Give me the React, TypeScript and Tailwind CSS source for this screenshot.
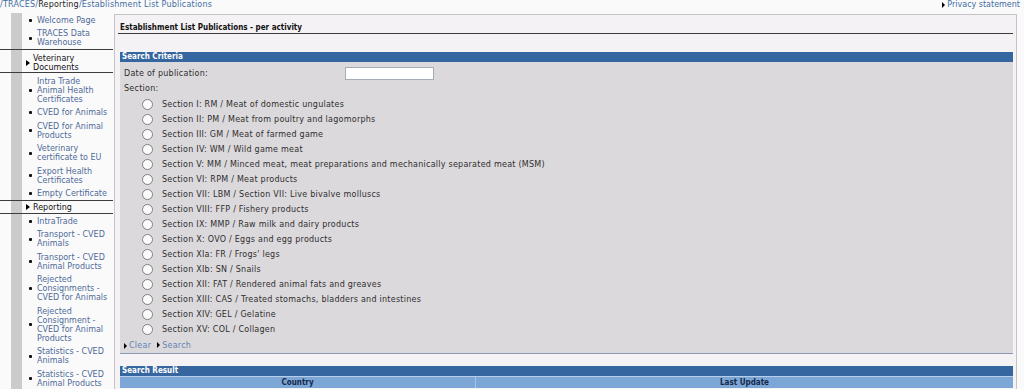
import React from "react";

const font = "font-['DejaVu_Sans',sans-serif]";
const bold = "font-['DejaVu_Sans_Condensed','DejaVu_Sans',sans-serif] font-bold tracking-normal";

const group1 = [["Welcome Page"], ["TRACES Data", "Warehouse"]];

const vetDocs = [
  ["Intra Trade", "Animal Health", "Certificates"],
  ["CVED for Animals"],
  ["CVED for Animal", "Products"],
  ["Veterinary", "certificate to EU"],
  ["Export Health", "Certificates"],
  ["Empty Certificate"],
];

const reporting = [
  ["IntraTrade"],
  ["Transport - CVED", "Animals"],
  ["Transport - CVED", "Animal Products"],
  ["Rejected", "Consignments -", "CVED for Animals"],
  ["Rejected", "Consignment -", "CVED for Animal", "Products"],
  ["Statistics - CVED", "Animals"],
  ["Statistics - CVED", "Animal Products"],
];

const sections = [
  "Section I: RM / Meat of domestic ungulates",
  "Section II: PM / Meat from poultry and lagomorphs",
  "Section III: GM / Meat of farmed game",
  "Section IV: WM / Wild game meat",
  "Section V: MM / Minced meat, meat preparations and mechanically separated meat (MSM)",
  "Section VI: RPM / Meat products",
  "Section VII: LBM / Section VII: Live bivalve molluscs",
  "Section VIII: FFP / Fishery products",
  "Section IX: MMP / Raw milk and dairy products",
  "Section X: OVO / Eggs and egg products",
  "Section XIa: FR / Frogs' legs",
  "Section XIb: SN / Snails",
  "Section XII: FAT / Rendered animal fats and greaves",
  "Section XIII: CAS / Treated stomachs, bladders and intestines",
  "Section XIV: GEL / Gelatine",
  "Section XV: COL / Collagen",
];

function Arrow({ size = 3 }: { size?: number }) {
  return size === 3 ? (
    <span className="inline-block w-0 h-0 border-y-[3px] border-y-transparent border-l-[3px] border-l-black mr-[2px]" />
  ) : (
    <span className="inline-block w-0 h-0 border-y-[3.5px] border-y-transparent border-l-[4px] border-l-black mr-[3px]" />
  );
}

function NavList({ items, className }: { items: string[][]; className: string }) {
  return (
    <ul className={`flex flex-col gap-[4.5px] pl-[29px] ${className}`}>
      {items.map((lines, i) => (
        <li key={i} className="flex items-center">
          <span className="w-[3px] h-[3px] bg-[#111] rounded-[1px] shrink-0" />
          <span className="ml-[5px] leading-[9px] text-[#4d6a98]">
            {lines.map((l, j) => (
              <span key={j} className="block whitespace-nowrap">
                {l}
              </span>
            ))}
          </span>
        </li>
      ))}
    </ul>
  );
}

function Sidebar() {
  return (
    <aside className="w-[113px] shrink-0 bg-[linear-gradient(to_right,transparent_11px,#cbcbcb_11px,#cbcbcb_22px,transparent_22px)]">
      <NavList items={group1} className="pt-[2.5px] pb-[2px]" />
      <div className="border-y border-[#3d3d3d] pl-[26px] pt-[3.5px] pb-[0.5px] flex items-center text-[#111] leading-[9px]">
        <Arrow size={4} />
        <span>
          <span className="block">Veterinary</span>
          <span className="block">Documents</span>
        </span>
      </div>
      <NavList items={vetDocs} className="pt-[3.5px] pb-[2px]" />
      <div className="border-y border-[#3d3d3d] pl-[26px] pt-[1.5px] pb-[1.5px] flex items-center text-[#111] leading-[9px]">
        <Arrow size={4} />
        <span>Reporting</span>
      </div>
      <NavList items={reporting} className="pt-[2.5px]" />
    </aside>
  );
}

function Radio() {
  return (
    <span className="w-[11px] h-[11px] rounded-full border border-[#808080] bg-[#fbfbfb] shrink-0" />
  );
}

export default function App() {
  return (
    <div className={`w-[1024px] h-[389px] overflow-hidden bg-[#fbfafb] text-[8px] ${font}`}>
      <div className="h-[13px] flex justify-between leading-[9px]">
        <div className="text-[#3f6da3] tracking-[0.2px]">
          /TRACES/<span className="text-[#1a1a1a]">Reporting</span>/Establishment List Publications
        </div>
        <div className="flex items-center h-[9px] pr-[4px] text-[#3f6da3]">
          <Arrow />
          Privacy statement
        </div>
      </div>
      <div className="flex">
        <Sidebar />
        <main className="ml-[1px] mt-[1px] w-[903px] h-[400px] border border-[#c6c2c6] bg-[#f5f2f5] pl-[5px] pr-[3px]">
          <div className={`pt-[7.5px] pb-[1px] border-b border-[#3a3a3a] leading-[9px] text-[#111] -ml-[2px] pl-[2px] ${bold}`}>
            Establishment List Publications - per activity
          </div>
          <div className={`mt-[18px] h-[10px] bg-[#35669f] text-white leading-[10px] pl-[2px] ${bold}`}>
            Search Criteria
          </div>
          <div className="bg-[#dcd9dc] border-b border-[#8a9ab3] pl-[4px] pt-[5px] pb-[2.5px] text-[#2e2e2e] tracking-[0.25px]">
            <div className="flex items-center h-[13px]">
              <span className="w-[221px] leading-[9px]">Date of publication:</span>
              <span className="w-[89px] h-[13px] border border-[#a5acb5] bg-white" />
            </div>
            <div className="mt-[4.5px] leading-[9px]">Section:</div>
            <div className="mt-[4px] flex flex-col">
              {sections.map((s) => (
                <label key={s} className="h-[15px] flex items-center pl-[17.5px]">
                  <Radio />
                  <span className="ml-[9.5px] leading-[9px] whitespace-nowrap">{s}</span>
                </label>
              ))}
            </div>
            <div className="mt-[4px] flex items-center leading-[9px] text-[#5f84b6]">
              <Arrow />
              <span>Clear</span>
              <span className="ml-[6px]">
                <Arrow />
              </span>
              <span>Search</span>
            </div>
          </div>
          <div className={`mt-[12px] h-[10px] bg-[#35669f] text-white leading-[10px] pl-[2px] ${bold}`}>
            Search Result
          </div>
          <div className={`flex h-[12px] bg-[#7ca6d6] border-t border-[#b7cfea] text-[#16294a] leading-[11px] ${bold}`}>
            <div className="w-[356px] text-center border-r border-[#a9c3e2]">Country</div>
            <div className="flex-1 text-center">Last Update</div>
          </div>
        </main>
      </div>
    </div>
  );
}
